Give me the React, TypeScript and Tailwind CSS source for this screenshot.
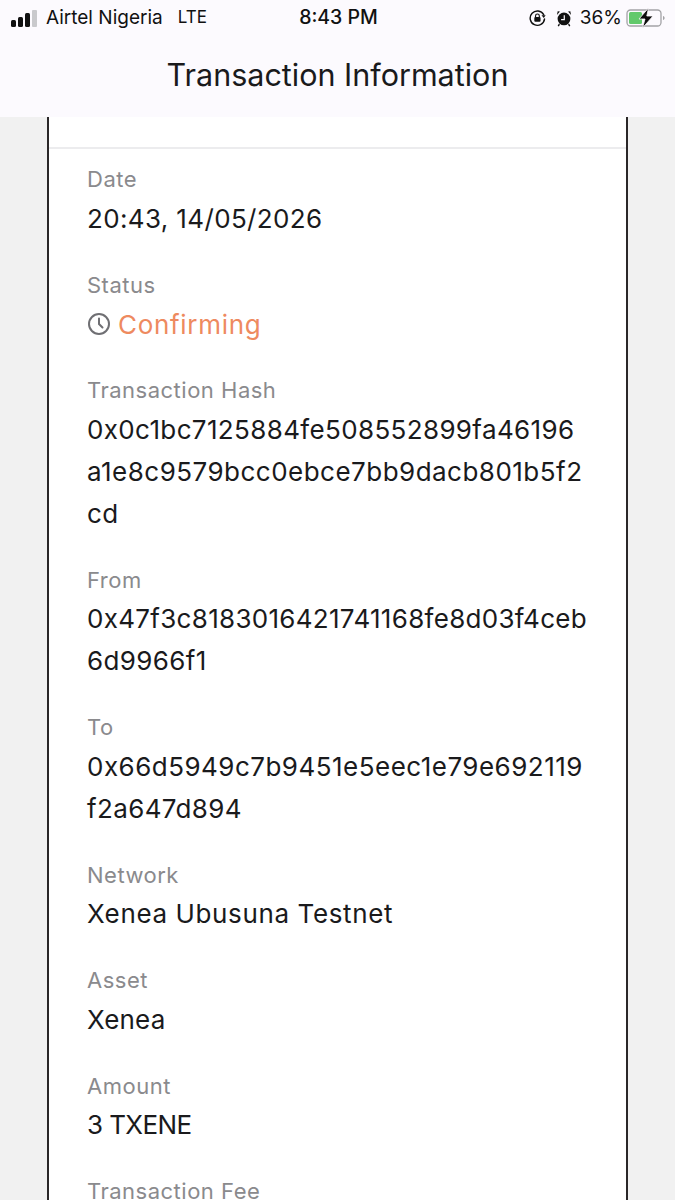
import React from "react";

type Line = { text: string; spacing?: string };
type Field = { label: string; lines: Line[] };

const restFields: Field[] = [
  {
    label: "Transaction Hash",
    lines: [
      { text: "0x0c1bc7125884fe508552899fa46196" },
      { text: "a1e8c9579bcc0ebce7bb9dacb801b5f2", spacing: "tracking-[0.48px]" },
      { text: "cd" },
    ],
  },
  {
    label: "From",
    lines: [{ text: "0x47f3c8183016421741168fe8d03f4ceb", spacing: "tracking-[0.3px]" }, { text: "6d9966f1" }],
  },
  {
    label: "To",
    lines: [{ text: "0x66d5949c7b9451e5eec1e79e692119", spacing: "tracking-[0.48px]" }, { text: "f2a647d894" }],
  },
  { label: "Network", lines: [{ text: "Xenea Ubusuna Testnet", spacing: "tracking-[0.62px]" }] },
  { label: "Asset", lines: [{ text: "Xenea", spacing: "tracking-[0.2px]" }] },
  { label: "Amount", lines: [{ text: "3 TXENE", spacing: "tracking-[-0.6px]" }] },
  { label: "Transaction Fee", lines: [] },
];

function Label({ children }: { children: React.ReactNode }) {
  return (
    <div className="h-8 mb-[2.5px] text-[22px] leading-8 tracking-[0.5px] text-[#8a8a8d]">{children}</div>
  );
}

function Row({ field }: { field: Field }) {
  return (
    <div className="mb-[29px]">
      <Label>{field.label}</Label>
      {field.lines.map((line) => (
        <div
          key={line.text}
          className={`h-[42px] text-[26px] leading-[42px] text-[#1a1a1c] whitespace-nowrap ${line.spacing ?? "tracking-[0.36px]"}`}
        >
          {line.text}
        </div>
      ))}
    </div>
  );
}

function LockRotationIcon() {
  return (
    <svg width="18" height="18" viewBox="0 0 19 18" fill="none">
      <path d="M15.5 5.5A7.6 7.6 0 1 0 16.4 10" stroke="#111" strokeWidth="1.5" strokeLinecap="round" />
      <path d="M13.2 6.2h4.4L15.6 9z" fill="#111" />
      <rect x="5.6" y="8" width="6.6" height="5" rx="1" fill="#111" />
      <path d="M6.9 8V6.8a2 2 0 0 1 4 0V8" stroke="#111" strokeWidth="1.2" />
    </svg>
  );
}

function AlarmIcon() {
  return (
    <svg width="16" height="17" viewBox="0 0 17 18" fill="none">
      <circle cx="8.5" cy="9.5" r="6.8" fill="#111" />
      <path d="M8.8 5.5v4.6H5.4" stroke="#fcfafe" strokeWidth="1.3" />
      <path d="M1 5.2 4.2 1.6 1.8 1.2zM16 5.2l-3.2-3.6 2.4-.4z" fill="#111" />
      <path d="M3.6 15 2.4 17M13.400 15l1.200 2" stroke="#111" strokeWidth="1.5" />
    </svg>
  );
}

function BatteryIcon() {
  return (
    <svg width="40" height="20" viewBox="0 0 40 20" fill="none">
      <rect x="1" y="2" width="34" height="16" rx="3.5" stroke="#a3a3a6" strokeWidth="1.3" />
      <rect x="3" y="4" width="13" height="12" rx="1.5" fill="#62c96b" />
      <path d="M37 8v4c1-.4 1.6-1.1 1.6-2S38 8.4 37 8z" fill="#a3a3a6" />
      <path d="M22.5 0 13 11h6l-2.5 9L27 8h-6.2z" fill="#0c0c0c" stroke="#fcfafe" strokeWidth="0.8" />
    </svg>
  );
}

function SignalBars() {
  return (
    <div className="flex items-end gap-[2px] w-[28px] h-[17px]">
      <div className="w-[5px] h-[7px] rounded-[1.5px] bg-[#111]" />
      <div className="w-[5px] h-[10px] rounded-[1.5px] bg-[#111]" />
      <div className="w-[5px] h-[14px] rounded-[1.5px] bg-[#111]" />
      <div className="w-[5px] h-[17px] rounded-[1px] bg-[#c9c9cc]" />
    </div>
  );
}

function ClockIcon() {
  return (
    <svg width="24" height="24" viewBox="0 0 24 24" fill="none" stroke="#6f6f73" strokeWidth="2" strokeLinecap="round">
      <circle cx="12" cy="12" r="10" />
      <path d="M12 6.5V12l3.5 3.5" />
    </svg>
  );
}

export default function App() {
  return (
    <div
      className="h-[1200px] w-[675px] overflow-hidden bg-[#f1f1f1] flex flex-col"
      style={{ fontFamily: "Inter, 'Noto Sans', sans-serif" }}
    >
      <header className="h-[117px] shrink-0 bg-[#fcfafe] flex flex-col">
        <div className="h-[34px] mt-[1px] pl-[11px] pr-[9px] grid grid-cols-[1fr_auto_1fr] items-center text-[#111]">
          <div className="flex items-center">
            <SignalBars />
            <span className="ml-[7px] text-[19px]">Airtel Nigeria</span>
            <span className="ml-[15px] text-[17px]">LTE</span>
          </div>
          <span className="text-[19.5px] font-medium">8:43 PM</span>
          <div className="flex items-center justify-end">
            <LockRotationIcon />
            <span className="ml-[9px]">
              <AlarmIcon />
            </span>
            <div className="ml-[8px] flex items-center gap-[4px]">
              <span className="text-[19px]">36%</span>
              <BatteryIcon />
            </div>
          </div>
        </div>
        <h1 className="mt-[15px] text-center text-[30.5px] leading-[50px] font-normal text-[#1a1a1c]">
          Transaction Information
        </h1>
      </header>

      <main className="mx-[47px] flex-1 bg-white border-x-2 border-[#2a2728]">
        <div className="h-[32px] border-b-2 border-[#ececee]" />
        <div className="pl-[38px] pt-[14px]">
          <Row field={{ label: "Date", lines: [{ text: "20:43, 14/05/2026" }] }} />
          <div className="mb-[29px]">
            <Label>Status</Label>
            <div className="h-[42px] flex items-center gap-[7px] text-[26px] tracking-[0.7px] text-[#ee8a5f]">
              <ClockIcon />
              <span>Confirming</span>
            </div>
          </div>
          {restFields.map((f) => (
            <Row key={f.label} field={f} />
          ))}
        </div>
      </main>
    </div>
  );
}
